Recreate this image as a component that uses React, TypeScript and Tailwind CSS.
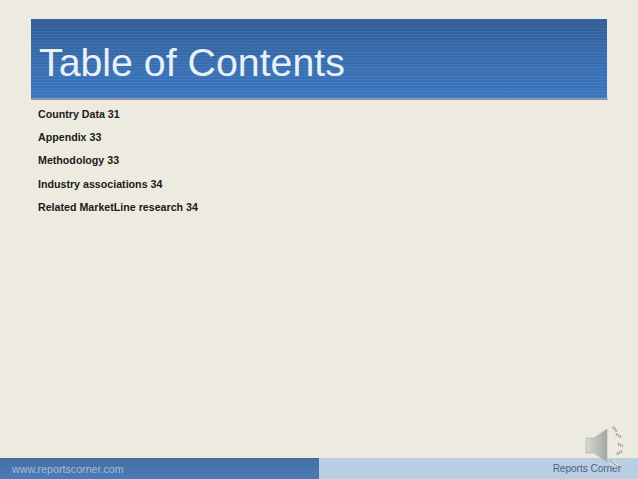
const items = [
  { label: "Country Data 31", mt: "mt-0" },
  { label: "Appendix 33", mt: "mt-[7px]" },
  { label: "Methodology 33", mt: "mt-[7px]" },
  { label: "Industry associations 34", mt: "mt-2" },
  { label: "Related MarketLine research 34", mt: "mt-[7px]" },
];

function SpeakerIcon() {
  return (
    <svg width="44" height="48" viewBox="0 0 44 48" className="absolute left-[584px] top-[424px]">
      <defs>
        <linearGradient id="cone" x1="0" y1="0" x2="1" y2="0">
          <stop offset="0" stopColor="#d6d8d4" />
          <stop offset="1" stopColor="#a4a6a6" />
        </linearGradient>
      </defs>
      <path d="M2 14 H10 L23 5 V38 L10 29 H2 Z" fill="url(#cone)" stroke="#b4b6b4" strokeWidth="0.8" />
      <g stroke="#f6f5ef" strokeWidth="4" fill="none">
        <path d="M29 3 L33 8" />
        <path d="M32 10 L37 13" />
        <path d="M34 20 L39 22" />
        <path d="M33 30 L38 27" />
        <path d="M27 37 L33 43" />
      </g>
      <g stroke="#9a9c9c" strokeWidth="3" fill="none" strokeDasharray="1.4 0.9">
        <path d="M29 3 L33 8" />
        <path d="M32 10 L37 13" />
        <path d="M34 20 L39 22" />
        <path d="M33 30 L38 27" />
        <path d="M27 37 L33 43" />
      </g>
    </svg>
  );
}

export default function App() {
  return (
    <div className="relative flex h-[479px] w-[638px] flex-col overflow-hidden bg-[#edeae0] font-['Liberation_Sans',Arial,sans-serif]">
      <div className="ml-[31px] mt-[18px] flex h-[82px] w-[577px] items-center border-t border-r border-b-2 border-t-[#dfe6ea] border-r-[#dfeaf3] border-b-[#8f969f] bg-[repeating-linear-gradient(180deg,rgba(255,255,255,0.05)_0px,rgba(255,255,255,0.05)_1px,rgba(0,0,0,0.04)_1px,rgba(0,0,0,0.04)_3px),linear-gradient(180deg,#34609a_0%,#3a71b6_55%,#3c79c6_100%)] pl-[8px]">
        <h1 className="mt-[9px] text-[39.3px] leading-none font-normal text-[#e9f0f6]">Table of Contents</h1>
      </div>

      <ul className="ml-[38px] mt-[6px] flex flex-col">
        {items.map((item) => (
          <li key={item.label} className={`${item.mt} text-[10.67px] leading-[16px] font-bold text-[#1a1a1a]`}>
            {item.label}
          </li>
        ))}
      </ul>

      <div className="mt-auto flex h-[21px] w-full bg-[#b9cde4]">
        <div className="flex w-[319px] items-center border-t border-t-[#3f6a99] bg-[linear-gradient(180deg,#44709f_0%,#4a7cba_100%)] pl-[12px]">
          <span className="text-[10.7px] leading-none text-[#a9bdd6]">www.reportscorner.com</span>
        </div>
        <div className="flex flex-1 items-center justify-end pr-[17px]">
          <span className="text-[10px] leading-none text-[#4d6280]">Reports Corner</span>
        </div>
      </div>

      <SpeakerIcon />
    </div>
  );
}
